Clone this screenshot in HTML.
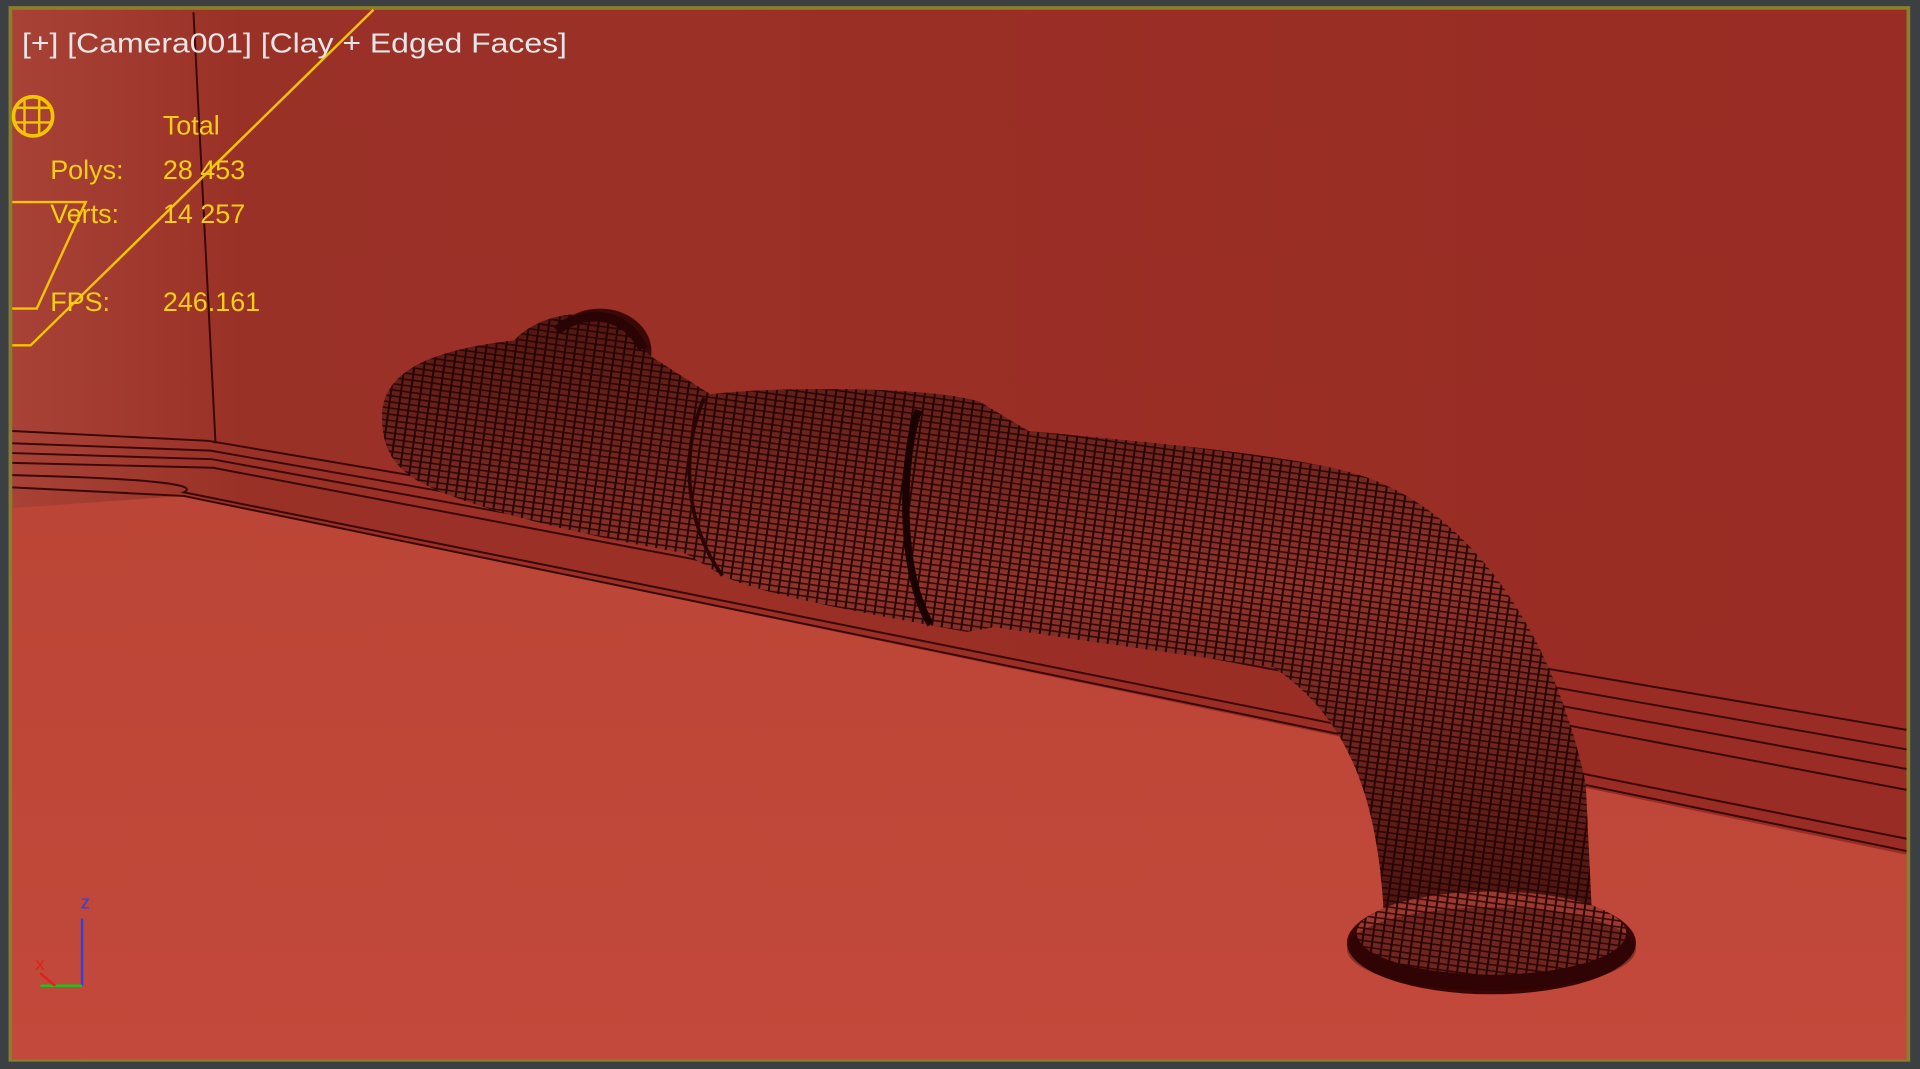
<!DOCTYPE html>
<html><head><style>
html,body{margin:0;padding:0;background:#3d4042;width:1920px;height:1069px;overflow:hidden}
svg{display:block}
</style></head><body>
<svg width="1920" height="1069" viewBox="0 0 1568 873" preserveAspectRatio="none" xmlns="http://www.w3.org/2000/svg">
<defs>
<linearGradient id="wall" x1="0" y1="0" x2="1" y2="0">
<stop offset="0" stop-color="#a84236"/><stop offset="0.12" stop-color="#9a3127"/><stop offset="1" stop-color="#992c24"/>
</linearGradient>
<linearGradient id="floor" x1="0" y1="0" x2="0" y2="1">
<stop offset="0" stop-color="#bb4536"/><stop offset="1" stop-color="#c2493b"/>
</linearGradient>
<pattern id="rings" width="8" height="5" patternUnits="userSpaceOnUse" patternTransform="rotate(8)">
<rect width="8" height="5" fill="#9a3a30"/>
<rect x="0" y="0" width="1.6" height="5" fill="#2a0504"/>
<rect x="0" y="0" width="8" height="1.3" fill="#3a0806"/>
</pattern>
<linearGradient id="shade" x1="0" y1="0" x2="0" y2="1">
<stop offset="0" stop-color="#200000" stop-opacity="0.6"/><stop offset="0.45" stop-color="#200000" stop-opacity="0.1"/><stop offset="1" stop-color="#200000" stop-opacity="0.65"/>
</linearGradient>
</defs>
<rect x="0" y="0" width="1568" height="873" fill="#3d4042"/>
<rect x="7" y="5" width="1553" height="862" fill="#8a7f2a"/>
<rect x="10" y="8" width="1547" height="857" fill="url(#wall)"/>
<path d="M10,415 L150,405 L1557,698 L1557,865 L10,865 Z" fill="url(#floor)"/>
<g stroke="#3a0806" stroke-width="1.6" fill="none">
<path d="M10,352 L170,360 L1557,596"/>
<path d="M10,362 L172,368 L1557,612"/>
<path d="M10,370 L173,375 L1557,628"/>
<path d="M10,378 L174,382 L1557,645"/>
<path d="M10,388 Q172,392 150,402 L1557,685"/>
<path d="M10,398 L150,405 L1557,695"/>
<path d="M158,10 L176,362"/>
</g>
<ellipse cx="490" cy="287" rx="42" ry="35" fill="#3a0806"/>
<path d="M312,340 C312,300 360,285 420,278 C440,255 500,240 530,290 L580,322 C640,315 760,316 800,328 L840,352 C950,362 1050,372 1100,385 C1200,410 1270,520 1295,640 L1300,745 L1130,745 C1125,650 1100,585 1040,545 C950,532 860,520 812,512 L790,516 C700,500 620,485 590,470 L560,452 C480,438 380,415 340,392 C318,378 312,362 312,340 Z" fill="url(#rings)"/>
<path d="M312,340 C312,300 360,285 420,278 C440,255 500,240 530,290 L580,322 C640,315 760,316 800,328 L840,352 C950,362 1050,372 1100,385 C1200,410 1270,520 1295,640 L1300,745 L1130,745 C1125,650 1100,585 1040,545 C950,532 860,520 812,512 L790,516 C700,500 620,485 590,470 L560,452 C480,438 380,415 340,392 C318,378 312,362 312,340 Z" fill="url(#shade)"/>
<path d="M750,335 C735,380 735,470 760,510" stroke="#1a0202" stroke-width="6" fill="none"/>
<path d="M575,325 C555,370 560,430 590,470" stroke="#2a0404" stroke-width="3" fill="none"/>
<path d="M455,270 C470,255 510,250 525,285" stroke="#2a0404" stroke-width="8" fill="none"/>
<ellipse cx="1218" cy="770" rx="118" ry="42" fill="#3a0605"/>
<ellipse cx="1218" cy="762" rx="110" ry="34" fill="url(#rings)"/>
<ellipse cx="1218" cy="775" rx="118" ry="34" fill="#200202" opacity="0.35"/>
<g stroke="#f2c500" stroke-width="2" fill="none">
<path d="M305,8 L25,282 L10,282"/>
<path d="M10,165 L70,165 L30,252 L10,252"/>
</g>
<circle cx="27" cy="95" r="16" fill="none" stroke="#f2c500" stroke-width="3"/>
<g stroke="#f2c500" stroke-width="2"><path d="M12,88 L42,88 M12,100 L42,100 M20,80 L20,110 M32,80 L32,110"/></g>
<text x="18" y="43" font-family="Liberation Sans, sans-serif" font-size="23" fill="#e6e6e6" textLength="445" lengthAdjust="spacingAndGlyphs">[+] [Camera001] [Clay + Edged Faces]</text>
<g font-family="Liberation Sans, sans-serif" font-size="22" fill="#f5cf10">
<text x="133" y="110">Total</text>
<text x="41" y="146">Polys:</text><text x="133" y="146">28 453</text>
<text x="41" y="182">Verts:</text><text x="133" y="182">14 257</text>
<text x="41" y="254">FPS:</text><text x="133" y="254">246.161</text>
</g>
<path d="M67,750 L67,805" stroke="#3040e0" stroke-width="2"/>
<path d="M33,805 L67,805" stroke="#20c020" stroke-width="2"/>
<path d="M33,795 L45,805" stroke="#e02020" stroke-width="2"/>
<text x="66" y="742" font-family="Liberation Sans, sans-serif" font-size="15" fill="#3040e0">z</text>
<text x="29" y="792" font-family="Liberation Sans, sans-serif" font-size="15" fill="#e02020">x</text>
</svg>
</body></html>
